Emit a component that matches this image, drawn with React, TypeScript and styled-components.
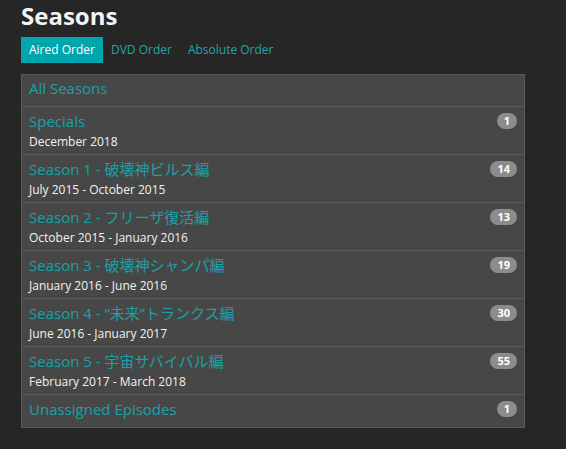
import styled, { createGlobalStyle } from "styled-components";

const GlobalStyle = createGlobalStyle`
  html, body {
    margin: 0;
    padding: 0;
    background: #262626;
  }
  body {
    font-family: "Open Sans", "Noto Sans CJK JP", sans-serif;
    color: #ffffff;
  }
`;

type Season = {
  name: string;
  dates?: string;
  count?: number;
};

const seasons: Season[] = [
  { name: "Specials", dates: "December 2018", count: 1 },
  { name: "Season 1 - 破壊神ビルス編", dates: "July 2015 - October 2015", count: 14 },
  { name: "Season 2 - フリーザ復活編", dates: "October 2015 - January 2016", count: 13 },
  { name: "Season 3 - 破壊神シャンパ編", dates: "January 2016 - June 2016", count: 19 },
  { name: "Season 4 - “未来”トランクス編", dates: "June 2016 - January 2017", count: 30 },
  { name: "Season 5 - 宇宙サバイバル編", dates: "February 2017 - March 2018", count: 55 },
  { name: "Unassigned Episodes", count: 1 },
];

const tabs = ["Aired Order", "DVD Order", "Absolute Order"];

const Page = styled.div`
  padding: 0 41px 20px 21px;
`;

const Title = styled.h1`
  margin: 0;
  font-size: 24px;
  font-weight: 700;
  line-height: 32px;
  color: #f4f4f4;
`;

const Tabs = styled.div`
  display: flex;
  margin-top: 5px;
`;

const Tab = styled.a<{ $active?: boolean }>`
  display: block;
  padding: 0 8px;
  height: 26px;
  line-height: 26px;
  font-size: 12px;
  color: ${(p) => (p.$active ? "#ffffff" : "#1ea7ae")};
  background: ${(p) => (p.$active ? "#00a6ad" : "transparent")};
  cursor: pointer;
`;

const Panel = styled.div`
  margin-top: 11px;
  width: 504px;
  box-sizing: border-box;
  border: 1px solid #5a5a5a;
  background: #474747;
`;

const Row = styled.div<{ $compact?: boolean }>`
  display: flex;
  justify-content: space-between;
  align-items: flex-start;
  padding: ${(p) => (p.$compact ? "2px 7px 7px 7px" : "3px 7px 3px 7px")};
  border-top: 1px solid #5a5a5a;
  &:first-child {
    border-top: none;
  }
  &:last-child {
    padding-top: 3px;
  }
`;

const Info = styled.div`
  display: flex;
  flex-direction: column;
`;

const Name = styled.a`
  font-size: 15px;
  line-height: 22px;
  color: #1aa1a8;
  cursor: pointer;
`;

const Dates = styled.div`
  margin-top: 1px;
  font-size: 12px;
  line-height: 18px;
  color: #f2f2f2;
`;

const Badge = styled.span`
  display: inline-block;
  min-width: 6px;
  height: 16px;
  line-height: 16px;
  padding: 0 7px;
  margin-top: 3px;
  border-radius: 8px;
  background: #8c8c8c;
  color: #ffffff;
  font-size: 11px;
  font-weight: 700;
  text-align: center;
`;

export default function App() {
  return (
    <>
      <GlobalStyle />
      <Page>
        <Title>Seasons</Title>
        <Tabs>
          {tabs.map((t, i) => (
            <Tab key={t} $active={i === 0}>
              {t}
            </Tab>
          ))}
        </Tabs>
        <Panel>
          <Row $compact>
            <Name>All Seasons</Name>
          </Row>
          {seasons.map((s) => (
            <Row key={s.name} $compact={!s.dates}>
              <Info>
                <Name>{s.name}</Name>
                {s.dates && <Dates>{s.dates}</Dates>}
              </Info>
              {s.count !== undefined && <Badge>{s.count}</Badge>}
            </Row>
          ))}
        </Panel>
      </Page>
    </>
  );
}
